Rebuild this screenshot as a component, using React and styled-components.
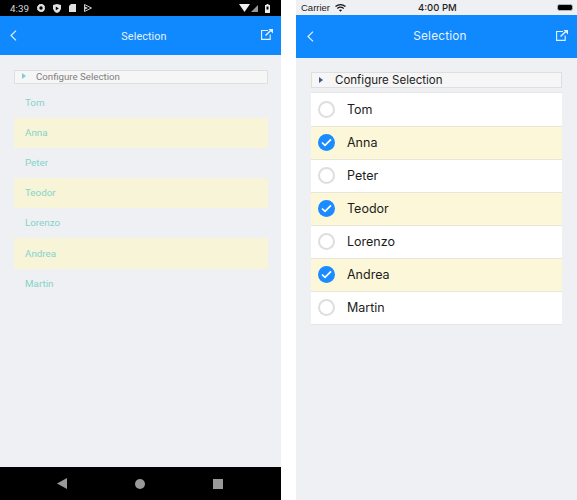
import React from 'react';
import styled, { createGlobalStyle } from 'styled-components';

const GlobalStyle = createGlobalStyle`
    html, body {
        margin: 0;
        padding: 0;
        background: #fff;
    }
`

const Page = styled.div`
    width: 577px;
    height: 500px;
    display: flex;
    justify-content: space-between;
    overflow: hidden;
    font-family: Roboto, "Liberation Sans", sans-serif;
`

const Phone = styled.div`
    width: 281px;
    height: 500px;
    display: flex;
    flex-direction: column;
    background: #eff0f4;
`

const AndroidStatus = styled.div`
    height: 16px;
    flex: none;
    background: #000;
    display: flex;
    align-items: center;
    padding: 0 11px 0 10px;
    gap: 8px;
    color: #d8d8d8;
    font-size: 9.8px;
`

const StatusRight = styled.div`
    margin-left: auto;
    display: flex;
    align-items: center;
    gap: 1px;
`

const IosStatus = styled.div`
    height: 15px;
    flex: none;
    position: relative;
    display: flex;
    align-items: center;
    padding: 0 4px 0 5px;
    color: #222;
    font-family: "Liberation Sans", sans-serif;
    font-size: 9.5px;
    gap: 5px;
`

const IosClock = styled.span`
    position: absolute;
    left: 122px;
    top: 2px;
    font-family: Inter, sans-serif;
    font-weight: 500;
    font-size: 9.5px;
    line-height: 12px;
`

const Battery = styled.div`
    margin-left: auto;
    width: 14px;
    height: 5px;
    background: #000;
    border: 1.5px solid #b5b5b5;
    border-radius: 2.5px;
`

const Header = styled.div`
    height: ${props => props.$ios ? 42 : 38}px;
    flex: none;
    background: #1189fe;
    display: flex;
    align-items: center;
    justify-content: space-between;
    padding: ${props => props.$ios ? '0 9px 1px 11px' : '0 8px 1px 10px'};
    color: #e6f2ff;
    position: relative;
`

const HeaderTitle = styled.div`
    position: absolute;
    left: 7px;
    right: 0;
    top: ${props => props.$ios ? 14 : 14}px;
    text-align: center;
    font-size: ${props => props.$ios ? 11.8 : 10.8}px;
    line-height: 14px;
    letter-spacing: ${props => props.$ios ? 0.2 : 0.1}px;
    font-family: ${props => props.$ios ? 'Inter, sans-serif' : 'Roboto, sans-serif'};
`

const Content = styled.div`
    flex: 1;
    padding: ${props => props.$ios ? '14px 15px 0' : '14.5px 13px 0 14px'};
`

const Expander = styled.div`
    height: ${props => props.$ios ? 16 : 14}px;
    box-sizing: border-box;
    background: #f6f6f6;
    border: 1px solid #dfdfdf;
    display: flex;
    align-items: center;
    padding-left: 7px;
    padding-bottom: 1px;
    font-size: ${props => props.$ios ? 11.5 : 9.7}px;
    color: ${props => props.$ios ? '#222' : '#808080'};
    font-family: ${props => props.$ios ? 'Inter, sans-serif' : 'Roboto, sans-serif'};
`

const Arrow = styled.span`
    width: 0;
    height: 0;
    border-left: 4px solid ${props => props.$ios ? '#41568c' : '#7fd0c8'};
    border-top: 3px solid transparent;
    border-bottom: 3px solid transparent;
    margin-right: ${props => props.$ios ? 12 : 10}px;
`

const AndroidList = styled.div`
    margin-top: 4px;
`

const AndroidRow = styled.div`
    height: 30.2px;
    box-sizing: border-box;
    display: flex;
    align-items: center;
    padding: 0 0 1px 11px;
    font-size: 9.8px;
    color: #84d3ca;
    background: ${props => props.$selected ? '#f8f4d8' : 'transparent'};
`

const IosList = styled.div`
    margin-top: 3.5px;
    background: #fff;
    border-top: 1px solid #e6e6e6;
    border-bottom: 1px solid #e6e6e6;
`

const IosRow = styled.div`
    height: 33px;
    box-sizing: border-box;
    display: flex;
    align-items: center;
    padding-left: 7px;
    gap: 12px;
    font-size: 12.5px;
    color: #1c1c1c;
    font-family: Inter, sans-serif;
    background: ${props => props.$selected ? '#fdf7d9' : '#fff'};
    & + & {
        border-top: 1px solid #e8e6d8;
    }
`

const Radio = styled.span`
    width: 17px;
    height: 17px;
    box-sizing: border-box;
    border-radius: 50%;
    border: ${props => props.$selected ? 'none' : '2px solid #dedede'};
    background: ${props => props.$selected ? '#1a8cff' : '#fff'};
    display: flex;
    align-items: center;
    justify-content: center;
`

const NavBar = styled.div`
    height: 33px;
    flex: none;
    margin-top: auto;
    background: #000;
    display: flex;
    align-items: center;
    padding-left: 57px;
    gap: 68px;
`

const names = ['Tom', 'Anna', 'Peter', 'Teodor', 'Lorenzo', 'Andrea', 'Martin'];

const BackIcon = () => (
    <svg width="7" height="11" viewBox="0 0 7 11" fill="none" stroke="#e6f2ff" strokeWidth="1.1">
        <path d="M6 0.7 L1 5.5 L6 10.3" />
    </svg>
)

const ShareIcon = () => (
    <svg width="12" height="11" viewBox="0 0 12 11" fill="none" stroke="#e6f2ff" strokeWidth="1.1" style={{ marginBottom: 1 }}>
        <path d="M7 1.5 H0.6 V10.4 H9.2 V5.5" />
        <path d="M4.5 6.5 L10 1.2" strokeWidth="1.4" />
        <path d="M7.5 0 H12 V4.5 Z" fill="#e6f2ff" stroke="none" />
    </svg>
)

const Check = () => (
    <svg width="11" height="9" viewBox="0 0 11 9" fill="none" stroke="#fff" strokeWidth="1.7">
        <path d="M1 4.5 L4 7.3 L10 1.3" />
    </svg>
)

const App = () => {
    return (
        <Page>
            <GlobalStyle />
            <Phone>
                <AndroidStatus>
                    <span>4:39</span>
                    <svg width="8" height="8" viewBox="0 0 8 8"><circle cx="4" cy="4" r="2.8" fill="none" stroke="#e0e0e0" strokeWidth="2.2" /><circle cx="4" cy="4" r="3.6" fill="none" stroke="#e0e0e0" strokeWidth="0.8" strokeDasharray="1.4 1.4" /></svg>
                    <svg width="8" height="9" viewBox="0 0 8 9"><path d="M0 1 L4 0 L8 1 V5 Q7 8 4 9 Q1 8 0 5 Z" fill="#e0e0e0" /><path d="M2.8 2.6 L5.8 4.4 L2.8 6.2 Z" fill="#000" /></svg>
                    <svg width="7" height="8" viewBox="0 0 7 8"><path d="M2 0 H7 V8 H0 V2 Z" fill="#e0e0e0" /></svg>
                    <svg width="8" height="8" viewBox="0 0 8 8"><path d="M0.5 0.5 L7.5 4 L0.5 7.5 Z" fill="none" stroke="#ccc" /><path d="M1 2.5 L4 4 L1 5.5 Z" fill="#ccc" /></svg>
                    <StatusRight>
                        <svg width="11" height="8" viewBox="0 0 11 8"><path d="M0 0 H11 L5.5 8 Z" fill="#eee" /></svg>
                        <svg width="7" height="7" viewBox="0 0 7 7"><path d="M7 0 V7 H0 Z" fill="#999" /></svg>
                        <svg width="5" height="9" viewBox="0 0 5 9" style={{ marginLeft: 6 }}><path d="M1.5 0 H3.5 V1 H5 V9 H0 V1 H1.5 Z" fill="#eee" /><rect x="1.5" y="2.5" width="2" height="3" fill="#000" /></svg>
                    </StatusRight>
                </AndroidStatus>
                <Header>
                    <BackIcon />
                    <HeaderTitle>Selection</HeaderTitle>
                    <ShareIcon />
                </Header>
                <Content>
                    <Expander>
                        <Arrow />
                        Configure Selection
                    </Expander>
                    <AndroidList>
                        {names.map((name, index) => (
                            <AndroidRow key={name} $selected={index % 2 === 1}>{name}</AndroidRow>
                        ))}
                    </AndroidList>
                </Content>
                <NavBar>
                    <svg width="10" height="11" viewBox="0 0 10 11"><path d="M10 0 V11 L0 5.5 Z" fill="#999" /></svg>
                    <svg width="10" height="10" viewBox="0 0 10 10"><circle cx="5" cy="5" r="5" fill="#999" /></svg>
                    <svg width="10" height="10" viewBox="0 0 10 10"><rect width="10" height="10" fill="#999" /></svg>
                </NavBar>
            </Phone>
            <Phone>
                <IosStatus>
                    <span>Carrier</span>
                    <svg width="11" height="8" viewBox="0 0 11 8" fill="none" stroke="#111" strokeWidth="1.3">
                        <path d="M0.5 2.6 Q5.5 -1.2 10.5 2.6" />
                        <path d="M2.3 4.4 Q5.5 2 8.7 4.4" />
                        <path d="M5.5 7.8 L3.9 6 Q5.5 5 7.1 6 Z" fill="#111" stroke="none" />
                    </svg>
                    <IosClock>4:00 PM</IosClock>
                    <Battery />
                </IosStatus>
                <Header $ios>
                    <BackIcon />
                    <HeaderTitle $ios>Selection</HeaderTitle>
                    <ShareIcon />
                </Header>
                <Content $ios>
                    <Expander $ios>
                        <Arrow $ios />
                        Configure Selection
                    </Expander>
                    <IosList>
                        {names.map((name, index) => (
                            <IosRow key={name} $selected={index % 2 === 1}>
                                <Radio $selected={index % 2 === 1}>
                                    {index % 2 === 1 && <Check />}
                                </Radio>
                                {name}
                            </IosRow>
                        ))}
                    </IosList>
                </Content>
            </Phone>
        </Page>
    )
}

export default App
